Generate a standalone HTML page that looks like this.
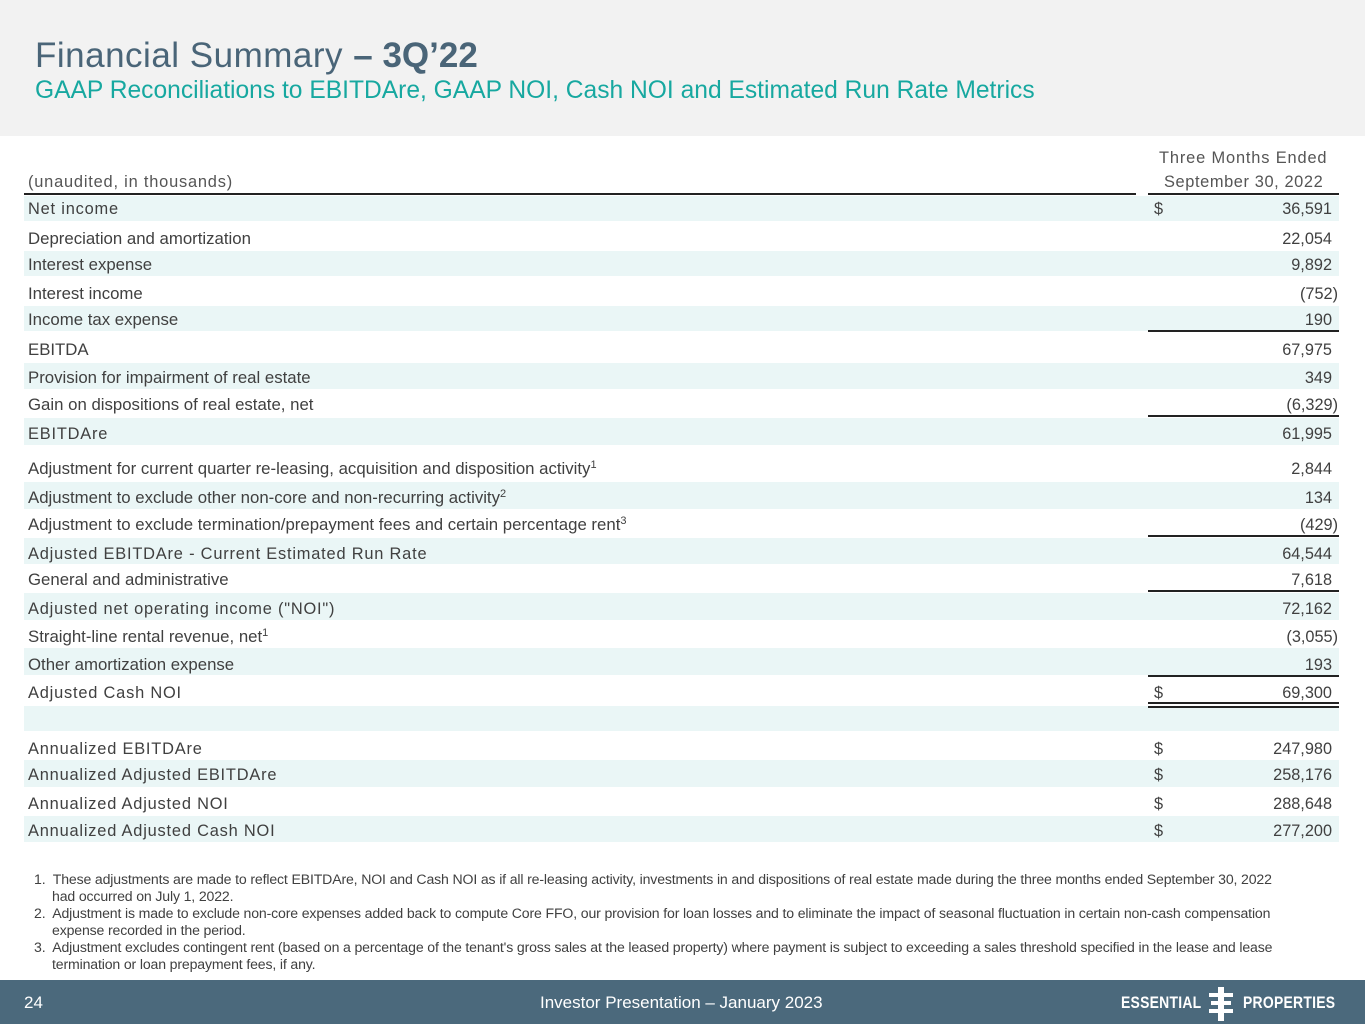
<!DOCTYPE html>
<html><head><meta charset="utf-8"><style>
body{margin:0;width:1365px;height:1024px;position:relative;background:#fff;font-family:"Liberation Sans",sans-serif;color:#404040;overflow:hidden}
.hdr{position:absolute;left:0;top:0;width:1365px;height:136px;background:#f2f2f2}
.t1{position:absolute;left:35px;top:36px;font-size:35px;color:#4a6578;letter-spacing:0.5px;white-space:nowrap}
.t1 b{font-weight:bold;letter-spacing:0}
.t2{position:absolute;left:35px;top:77px;font-size:24.6px;color:#17a8a0;white-space:nowrap}
.band{position:absolute;left:24px;width:1315px;background:#eaf6f6}
.l{position:absolute;left:28px;font-size:16.8px;white-space:nowrap;line-height:20px;margin-top:2px}
.sp{letter-spacing:0.8px;font-size:16.4px}
.v{position:absolute;right:33px;font-size:16.3px;line-height:20px;white-space:nowrap;margin-top:2px}
.vp{right:27px}
.d{position:absolute;left:1154px;font-size:16.3px;line-height:20px;margin-top:2px}
.ln{position:absolute;left:1148px;width:191px;height:2px;background:#222}
sup{font-size:11px;vertical-align:6px;line-height:0}
.fn{position:absolute;left:34px;top:871px;font-size:14.1px;line-height:17px;color:#404040;width:1262px;letter-spacing:-0.15px}
.fn div{padding-left:18px;text-indent:-18px}
.ft{position:absolute;left:0;top:980px;width:1365px;height:44px;background:#4b697c;color:#fff}
</style></head><body>
<div class="hdr"></div>
<div class="t1">Financial Summary <b>– 3Q’22</b></div>
<div class="t2">GAAP Reconciliations to EBITDAre, GAAP NOI, Cash NOI and Estimated Run Rate Metrics</div>

<div class="l sp" style="left:28px;top:170px;color:#555">(unaudited, in thousands)</div>
<div class="l sp" style="left:1159px;top:146px;color:#555;letter-spacing:0.85px">Three Months Ended</div>
<div class="l sp" style="left:1164px;top:170px;color:#555;letter-spacing:0.6px">September 30, 2022</div>
<div style="position:absolute;left:24px;top:193px;width:1112px;height:2px;background:#222"></div>
<div class="ln" style="top:193px"></div>

<div class="band" style="top:196px;height:25px"></div>
<div class="band" style="top:251px;height:25px"></div>
<div class="band" style="top:306px;height:25px"></div>
<div class="band" style="top:363px;height:26px"></div>
<div class="band" style="top:418px;height:27px"></div>
<div class="band" style="top:482px;height:27px"></div>
<div class="band" style="top:538px;height:26px"></div>
<div class="band" style="top:593px;height:27px"></div>
<div class="band" style="top:648px;height:27px"></div>
<div class="band" style="top:706px;height:25px"></div>
<div class="band" style="top:760px;height:27px"></div>
<div class="band" style="top:816px;height:26px"></div>

<div class="l sp" style="top:197px">Net income</div><div class="d" style="top:197px">$</div><div class="v" style="top:197px">36,591</div>
<div class="l" style="top:227px">Depreciation and amortization</div><div class="v" style="top:227px">22,054</div>
<div class="l" style="top:253px">Interest expense</div><div class="v" style="top:253px">9,892</div>
<div class="l" style="top:282px">Interest income</div><div class="v vp" style="top:282px">(752)</div>
<div class="l" style="top:308px">Income tax expense</div><div class="v" style="top:308px">190</div>
<div class="ln" style="top:330px"></div>
<div class="l" style="top:338px">EBITDA</div><div class="v" style="top:338px">67,975</div>
<div class="l" style="top:366px">Provision for impairment of real estate</div><div class="v" style="top:366px">349</div>
<div class="l" style="top:393px">Gain on dispositions of real estate, net</div><div class="v vp" style="top:393px">(6,329)</div>
<div class="ln" style="top:415px"></div>
<div class="l sp" style="top:422px">EBITDAre</div><div class="v" style="top:422px">61,995</div>
<div class="l" style="top:457px">Adjustment for current quarter re-leasing, acquisition and disposition activity<sup>1</sup></div><div class="v" style="top:457px">2,844</div>
<div class="l" style="top:486px">Adjustment to exclude other non-core and non-recurring activity<sup>2</sup></div><div class="v" style="top:486px">134</div>
<div class="l" style="top:513px">Adjustment to exclude termination/prepayment fees and certain percentage rent<sup>3</sup></div><div class="v vp" style="top:513px">(429)</div>
<div class="ln" style="top:535px"></div>
<div class="l sp" style="top:542px">Adjusted EBITDAre - Current Estimated Run Rate</div><div class="v" style="top:542px">64,544</div>
<div class="l" style="top:568px">General and administrative</div><div class="v" style="top:568px">7,618</div>
<div class="ln" style="top:590px"></div>
<div class="l sp" style="top:597px">Adjusted net operating income ("NOI")</div><div class="v" style="top:597px">72,162</div>
<div class="l" style="top:625px">Straight-line rental revenue, net<sup>1</sup></div><div class="v vp" style="top:625px">(3,055)</div>
<div class="l" style="top:653px">Other amortization expense</div><div class="v" style="top:653px">193</div>
<div class="ln" style="top:675px"></div>
<div class="l sp" style="top:681px">Adjusted Cash NOI</div><div class="d" style="top:681px">$</div><div class="v" style="top:681px">69,300</div>
<div class="ln" style="top:702px"></div><div class="ln" style="top:706px"></div>
<div class="l sp" style="top:737px">Annualized EBITDAre</div><div class="d" style="top:737px">$</div><div class="v" style="top:737px">247,980</div>
<div class="l sp" style="top:763px">Annualized Adjusted EBITDAre</div><div class="d" style="top:763px">$</div><div class="v" style="top:763px">258,176</div>
<div class="l sp" style="top:792px">Annualized Adjusted NOI</div><div class="d" style="top:792px">$</div><div class="v" style="top:792px">288,648</div>
<div class="l sp" style="top:819px">Annualized Adjusted Cash NOI</div><div class="d" style="top:819px">$</div><div class="v" style="top:819px">277,200</div>

<div class="fn">
<div>1.&nbsp; These adjustments are made to reflect EBITDAre, NOI and Cash NOI as if all re-leasing activity, investments in and dispositions of real estate made during the three months ended September 30, 2022 had occurred on July 1, 2022.</div>
<div>2.&nbsp; Adjustment is made to exclude non-core expenses added back to compute Core FFO, our provision for loan losses and to eliminate the impact of seasonal fluctuation in certain non-cash compensation expense recorded in the period.</div>
<div>3.&nbsp; Adjustment excludes contingent rent (based on a percentage of the tenant's gross sales at the leased property) where payment is subject to exceeding a sales threshold specified in the lease and lease termination or loan prepayment fees, if any.</div>
</div>

<div class="ft">
<div style="position:absolute;left:24px;top:13px;font-size:17px">24</div>
<div style="position:absolute;left:540px;top:13px;font-size:17px">Investor Presentation – January 2023</div>
<div style="position:absolute;left:1121px;top:13px;font-size:17px;font-weight:bold;letter-spacing:0.3px;transform:scaleX(0.82);transform-origin:left">ESSENTIAL</div>
<svg style="position:absolute;left:1207px;top:7px" width="28" height="34" viewBox="0 0 28 34">
<rect x="11" y="0" width="6" height="34" fill="#fff"/>
<rect x="2" y="6" width="24" height="4" fill="#fff"/>
<rect x="4" y="14" width="20" height="4" fill="#fff"/>
<rect x="2" y="22" width="24" height="4" fill="#fff"/>
</svg>
<div style="position:absolute;left:1243px;top:13px;font-size:17px;font-weight:bold;letter-spacing:0.3px;transform:scaleX(0.82);transform-origin:left">PROPERTIES</div>
</div>
</body></html>
